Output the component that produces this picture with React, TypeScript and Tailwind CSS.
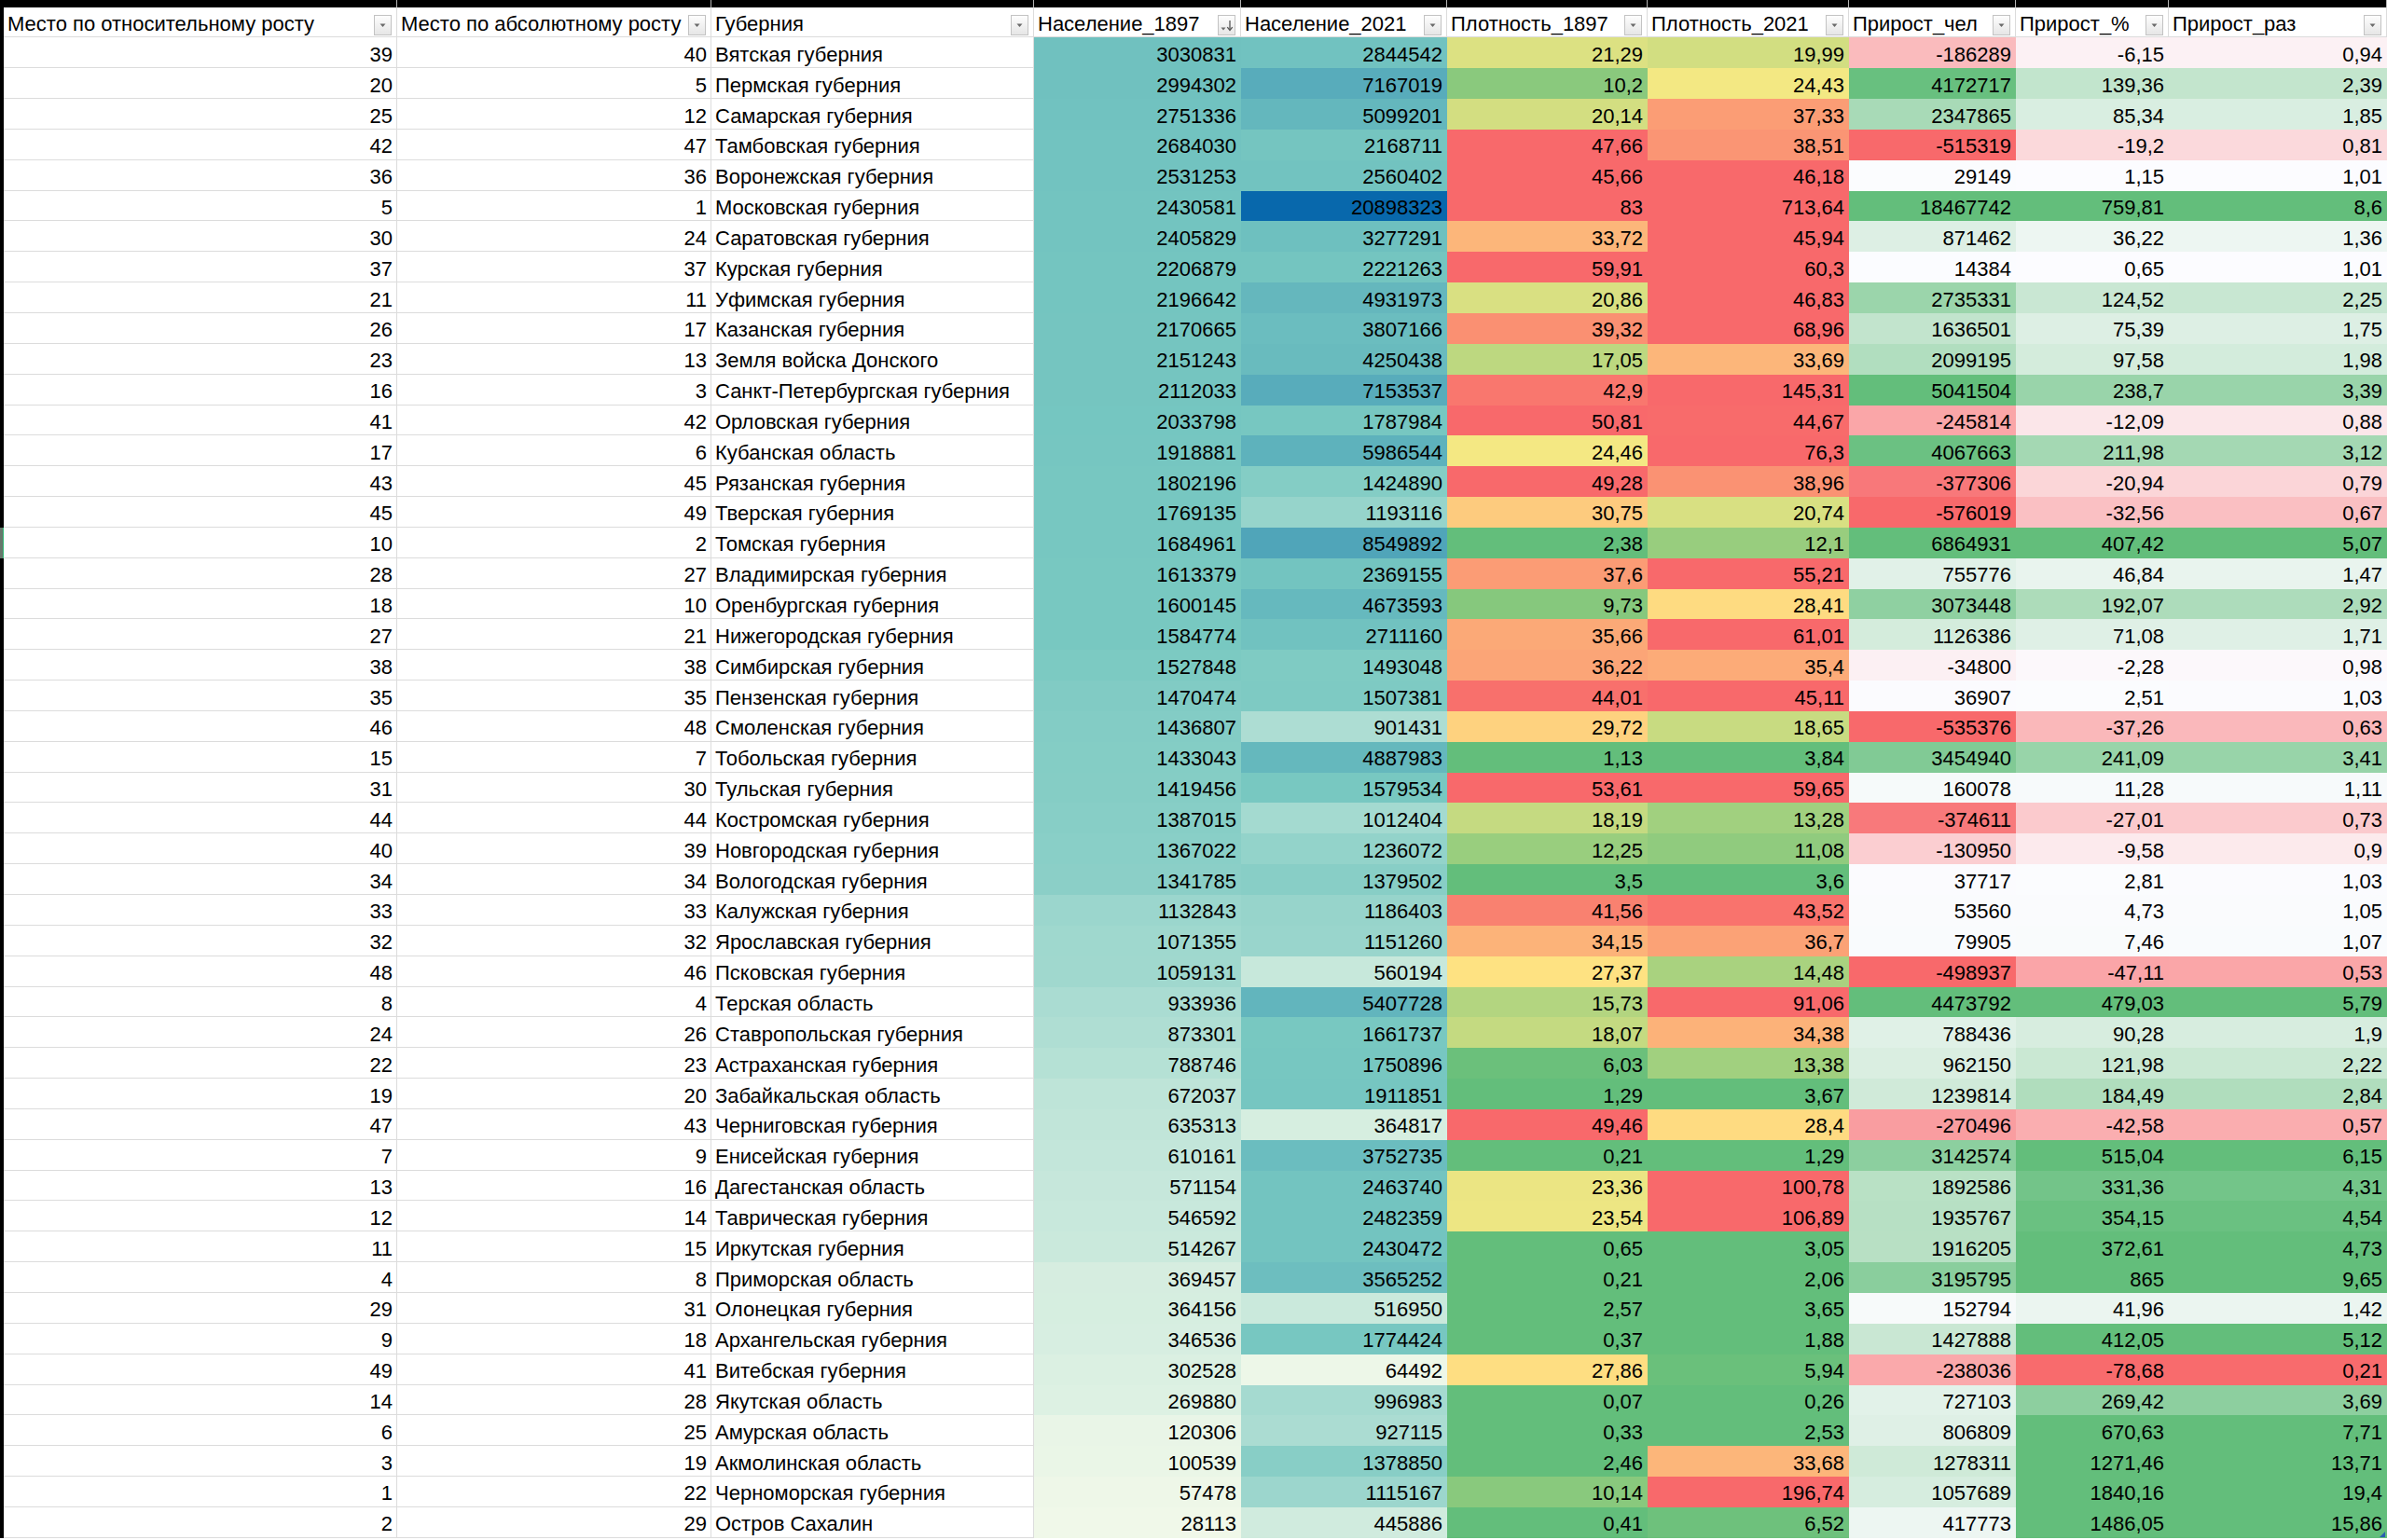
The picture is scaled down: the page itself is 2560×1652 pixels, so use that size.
type Rgb = [number, number, number];

const hex = (h: string): Rgb => [
  parseInt(h.slice(1, 3), 16),
  parseInt(h.slice(3, 5), 16),
  parseInt(h.slice(5, 7), 16),
];

const GREEN = hex("#63be7b");
const YELLOW = hex("#ffeb84");
const RED = hex("#f8696b");
const WHITE = hex("#fcfcff");

type Stop = [number, Rgb];

// Excel-like colour scale: linear between stops, clamped at the ends
function scale(v: number, stops: Stop[]): string {
  let c: Rgb = stops[0][1];
  if (v <= stops[0][0]) c = stops[0][1];
  else if (v >= stops[stops.length - 1][0]) c = stops[stops.length - 1][1];
  else {
    for (let i = 0; i < stops.length - 1; i++) {
      const [a, ca] = stops[i];
      const [b, cb] = stops[i + 1];
      if (v >= a && v <= b) {
        const t = (v - a) / (b - a);
        c = [0, 1, 2].map((k) => Math.round(ca[k] + (cb[k] - ca[k]) * t)) as Rgb;
        break;
      }
    }
  }
  return `rgb(${c[0]}, ${c[1]}, ${c[2]})`;
}

const num = (s: string) => parseFloat(s.replace(",", "."));

type Row = [string, string, string, string, string, string, string, string, string, string];

const rows: Row[] = [
  ["39", "40", "Вятская губерния", "3030831", "2844542", "21,29", "19,99", "-186289", "-6,15", "0,94"],
  ["20", "5", "Пермская губерния", "2994302", "7167019", "10,2", "24,43", "4172717", "139,36", "2,39"],
  ["25", "12", "Самарская губерния", "2751336", "5099201", "20,14", "37,33", "2347865", "85,34", "1,85"],
  ["42", "47", "Тамбовская губерния", "2684030", "2168711", "47,66", "38,51", "-515319", "-19,2", "0,81"],
  ["36", "36", "Воронежская губерния", "2531253", "2560402", "45,66", "46,18", "29149", "1,15", "1,01"],
  ["5", "1", "Московская губерния", "2430581", "20898323", "83", "713,64", "18467742", "759,81", "8,6"],
  ["30", "24", "Саратовская губерния", "2405829", "3277291", "33,72", "45,94", "871462", "36,22", "1,36"],
  ["37", "37", "Курская губерния", "2206879", "2221263", "59,91", "60,3", "14384", "0,65", "1,01"],
  ["21", "11", "Уфимская губерния", "2196642", "4931973", "20,86", "46,83", "2735331", "124,52", "2,25"],
  ["26", "17", "Казанская губерния", "2170665", "3807166", "39,32", "68,96", "1636501", "75,39", "1,75"],
  ["23", "13", "Земля войска Донского", "2151243", "4250438", "17,05", "33,69", "2099195", "97,58", "1,98"],
  ["16", "3", "Санкт-Петербургская губерния", "2112033", "7153537", "42,9", "145,31", "5041504", "238,7", "3,39"],
  ["41", "42", "Орловская губерния", "2033798", "1787984", "50,81", "44,67", "-245814", "-12,09", "0,88"],
  ["17", "6", "Кубанская область", "1918881", "5986544", "24,46", "76,3", "4067663", "211,98", "3,12"],
  ["43", "45", "Рязанская губерния", "1802196", "1424890", "49,28", "38,96", "-377306", "-20,94", "0,79"],
  ["45", "49", "Тверская губерния", "1769135", "1193116", "30,75", "20,74", "-576019", "-32,56", "0,67"],
  ["10", "2", "Томская губерния", "1684961", "8549892", "2,38", "12,1", "6864931", "407,42", "5,07"],
  ["28", "27", "Владимирская губерния", "1613379", "2369155", "37,6", "55,21", "755776", "46,84", "1,47"],
  ["18", "10", "Оренбургская губерния", "1600145", "4673593", "9,73", "28,41", "3073448", "192,07", "2,92"],
  ["27", "21", "Нижегородская губерния", "1584774", "2711160", "35,66", "61,01", "1126386", "71,08", "1,71"],
  ["38", "38", "Симбирская губерния", "1527848", "1493048", "36,22", "35,4", "-34800", "-2,28", "0,98"],
  ["35", "35", "Пензенская губерния", "1470474", "1507381", "44,01", "45,11", "36907", "2,51", "1,03"],
  ["46", "48", "Смоленская губерния", "1436807", "901431", "29,72", "18,65", "-535376", "-37,26", "0,63"],
  ["15", "7", "Тобольская губерния", "1433043", "4887983", "1,13", "3,84", "3454940", "241,09", "3,41"],
  ["31", "30", "Тульская губерния", "1419456", "1579534", "53,61", "59,65", "160078", "11,28", "1,11"],
  ["44", "44", "Костромская губерния", "1387015", "1012404", "18,19", "13,28", "-374611", "-27,01", "0,73"],
  ["40", "39", "Новгородская губерния", "1367022", "1236072", "12,25", "11,08", "-130950", "-9,58", "0,9"],
  ["34", "34", "Вологодская губерния", "1341785", "1379502", "3,5", "3,6", "37717", "2,81", "1,03"],
  ["33", "33", "Калужская губерния", "1132843", "1186403", "41,56", "43,52", "53560", "4,73", "1,05"],
  ["32", "32", "Ярославская губерния", "1071355", "1151260", "34,15", "36,7", "79905", "7,46", "1,07"],
  ["48", "46", "Псковская губерния", "1059131", "560194", "27,37", "14,48", "-498937", "-47,11", "0,53"],
  ["8", "4", "Терская область", "933936", "5407728", "15,73", "91,06", "4473792", "479,03", "5,79"],
  ["24", "26", "Ставропольская губерния", "873301", "1661737", "18,07", "34,38", "788436", "90,28", "1,9"],
  ["22", "23", "Астраханская губерния", "788746", "1750896", "6,03", "13,38", "962150", "121,98", "2,22"],
  ["19", "20", "Забайкальская область", "672037", "1911851", "1,29", "3,67", "1239814", "184,49", "2,84"],
  ["47", "43", "Черниговская губерния", "635313", "364817", "49,46", "28,4", "-270496", "-42,58", "0,57"],
  ["7", "9", "Енисейская губерния", "610161", "3752735", "0,21", "1,29", "3142574", "515,04", "6,15"],
  ["13", "16", "Дагестанская область", "571154", "2463740", "23,36", "100,78", "1892586", "331,36", "4,31"],
  ["12", "14", "Таврическая губерния", "546592", "2482359", "23,54", "106,89", "1935767", "354,15", "4,54"],
  ["11", "15", "Иркутская губерния", "514267", "2430472", "0,65", "3,05", "1916205", "372,61", "4,73"],
  ["4", "8", "Приморская область", "369457", "3565252", "0,21", "2,06", "3195795", "865", "9,65"],
  ["29", "31", "Олонецкая губерния", "364156", "516950", "2,57", "3,65", "152794", "41,96", "1,42"],
  ["9", "18", "Архангельская губерния", "346536", "1774424", "0,37", "1,88", "1427888", "412,05", "5,12"],
  ["49", "41", "Витебская губерния", "302528", "64492", "27,86", "5,94", "-238036", "-78,68", "0,21"],
  ["14", "28", "Якутская область", "269880", "996983", "0,07", "0,26", "727103", "269,42", "3,69"],
  ["6", "25", "Амурская область", "120306", "927115", "0,33", "2,53", "806809", "670,63", "7,71"],
  ["3", "19", "Акмолинская область", "100539", "1378850", "2,46", "33,68", "1278311", "1271,46", "13,71"],
  ["1", "22", "Черноморская губерния", "57478", "1115167", "10,14", "196,74", "1057689", "1840,16", "19,4"],
  ["2", "29", "Остров Сахалин", "28113", "445886", "0,41", "6,52", "417773", "1486,05", "15,86"],
];

// population scale is shared by both population columns
const pops = rows.flatMap((r) => [num(r[3]), num(r[4])]).sort((a, b) => a - b);
const popMedian = (pops[pops.length / 2 - 1] + pops[pops.length / 2]) / 2;
const popStops: Stop[] = [
  [pops[0], hex("#f0f8e9")],
  [popMedian, hex("#78c8c1")],
  [pops[pops.length - 1], hex("#0868ac")],
];
const densStops: Stop[] = [
  [5, GREEN],
  [26, YELLOW],
  [45, RED],
];
const chelStops: Stop[] = [
  [-420000, RED],
  [0, WHITE],
  [4300000, GREEN],
];
const pctStops: Stop[] = [
  [-80, RED],
  [0, WHITE],
  [370, GREEN],
];
const razStops: Stop[] = [
  [0.2, RED],
  [1, WHITE],
  [4.7, GREEN],
];

const cols = [
  { title: "Место по относительному росту", w: "w-[422px]", stops: null, align: "right" },
  { title: "Место по абсолютному росту", w: "w-[337px]", stops: null, align: "right" },
  { title: "Губерния", w: "w-[346px]", stops: null, align: "left" },
  { title: "Население_1897", w: "w-[222px]", stops: popStops, align: "right", sorted: true },
  { title: "Население_2021", w: "w-[221px]", stops: popStops, align: "right" },
  { title: "Плотность_1897", w: "w-[215px]", stops: densStops, align: "right" },
  { title: "Плотность_2021", w: "w-[216px]", stops: densStops, align: "right" },
  { title: "Прирост_чел", w: "w-[179px]", stops: chelStops, align: "right" },
  { title: "Прирост_%", w: "w-[164px]", stops: pctStops, align: "right" },
  { title: "Прирост_раз", w: "w-[234px]", stops: razStops, align: "right" },
] as { title: string; w: string; stops: Stop[] | null; align: string; sorted?: boolean }[];

function FilterButton({ sorted }: { sorted?: boolean }) {
  return (
    <div className="mb-[1px] flex h-[22px] w-[19px] shrink-0 items-center justify-center border border-[#c3c3c3] bg-gradient-to-b from-[#fdfdfd] to-[#e6e6e6]">
      {sorted ? (
        <svg width="17" height="20" viewBox="0 0 17 20">
          <path d="M2.5 12.5h5l-2.5 3z" fill="#6a6a6a" />
          <path d="M12 5v10" stroke="#555" strokeWidth="1.3" />
          <path d="M9.3 12.2l2.7 3.3 2.7-3.3" stroke="#555" strokeWidth="1.3" fill="none" />
        </svg>
      ) : (
        <svg width="9" height="6" viewBox="0 0 9 6">
          <path d="M1.5 1.5h6l-3 3.5z" fill="#6a6a6a" />
        </svg>
      )}
    </div>
  );
}

export default function App() {
  return (
    <div className="min-h-screen w-[2560px] overflow-hidden bg-white font-['Liberation_Sans',Arial,sans-serif] text-[22px] leading-none text-black">
      {/* cut-off row above the table */}
      <div className="flex h-[8px] bg-black">
        <div className="w-[4px] shrink-0" />
        {cols.map((c) => (
          <div key={c.title} className={`${c.w} h-full shrink-0 border-r border-[#b5b5b5]`} />
        ))}
      </div>

      {/* Header */}
      <div className="flex h-[32.4px]">
        <div className="w-[4px] shrink-0 bg-black" />
        {cols.map((c) => (
          <div
            key={c.title}
            className={`${c.w} flex h-full shrink-0 items-end justify-between border-r border-b border-[#dcdcdc] pl-[4px] pr-[5px]`}
          >
            <span className="self-center whitespace-nowrap pt-[5px]">{c.title}</span>
            <FilterButton sorted={c.sorted} />
          </div>
        ))}
      </div>

      {/* Rows */}
      {rows.map((r, i) => (
        <div key={r[2]} className="flex h-[32.85px]">
          {i === 16 ? (
            <div className="w-[4px] shrink-0 border-r border-[#2fb875] bg-[#67776c]" />
          ) : (
            <div className="w-[4px] shrink-0 bg-black" />
          )}
          {cols.map((c, j) => {
            const last = i === rows.length - 1 && j === cols.length - 1;
            if (!c.stops) {
              return (
                <div
                  key={j}
                  className={`${c.w} flex h-full shrink-0 items-center border-r border-b border-[#dcdcdc] pt-[5px] ${
                    c.align === "left" ? "justify-start pl-[4px]" : "justify-end pr-[4px]"
                  }`}
                >
                  <span className="whitespace-nowrap">{r[j]}</span>
                </div>
              );
            }
            return (
              <div
                key={j}
                className={`${c.w} relative flex h-full shrink-0 items-center justify-end pt-[4px] pr-[5px]`}
                style={{ backgroundColor: scale(num(r[j]), c.stops) }}
              >
                <span className="whitespace-nowrap">{r[j]}</span>
                {last && (
                  <svg className="absolute right-[2px] bottom-[1px]" width="6" height="6" viewBox="0 0 6 6">
                    <path d="M6 0v6H0z" fill="#2a5fb0" />
                  </svg>
                )}
              </div>
            );
          })}
        </div>
      ))}
    </div>
  );
}
